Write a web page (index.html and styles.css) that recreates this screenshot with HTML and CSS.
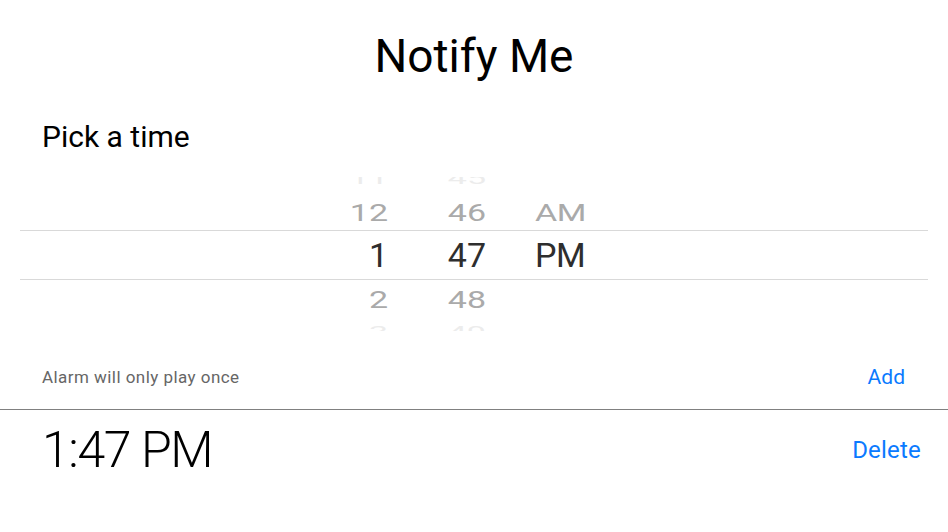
FILE: index.html
```html
<!DOCTYPE html>
<html>
<head>
<meta charset="utf-8">
<link rel="stylesheet" href="styles.css">
</head>
<body>
<div class="app">
  <h1 class="title">Notify Me</h1>
  <h2 class="label">Pick a time</h2>
  <div class="picker">
    <div class="row edge top"><span class="h">11</span><span class="m">45</span><span class="p"></span></div>
    <div class="row near up"><span class="h">12</span><span class="m">46</span><span class="p">AM</span></div>
    <div class="row selected"><span class="h">1</span><span class="m">47</span><span class="p">PM</span></div>
    <div class="row near down"><span class="h">2</span><span class="m">48</span><span class="p"></span></div>
    <div class="row edge bottom"><span class="h">3</span><span class="m">49</span><span class="p"></span></div>
  </div>
  <div class="actions">
    <span class="note">Alarm will only play once</span>
    <a class="link add">Add</a>
  </div>
  <div class="alarm">
    <span class="time">1:47 PM</span>
    <a class="link delete">Delete</a>
  </div>
</div>
</body>
</html>
```
FILE: styles.css
```css
html, body {
  margin: 0;
  padding: 0;
  background: #fff;
}
body {
  font-family: Roboto, "Liberation Sans", sans-serif;
  color: #000;
  width: 948px;
  height: 532px;
  overflow: hidden;
}
.app {
  display: flex;
  flex-direction: column;
}
.title {
  margin: 0;
  padding-top: 26px;
  font-size: 46px;
  font-weight: 400;
  line-height: 60px;
  text-align: center;
}
.label {
  margin: 0;
  padding: 0 42px;
  margin-top: 31px;
  font-size: 30px;
  font-weight: 400;
  line-height: 40px;
}
.picker {
  margin: 20px 20px 0;
  height: 154px;
  overflow: hidden;
  display: flex;
  flex-direction: column;
  flex-shrink: 0;
}
.row {
  display: grid;
  grid-template-columns: 368px 98px 1fr;
  align-items: center;
  font-size: 34px;
  color: #2e2e2e;
  flex-shrink: 0;
  box-sizing: border-box;
}
.row span { display: block; }
.row .h, .row .m { text-align: right; }
.row .p { padding-left: 49px; letter-spacing: -0.5px; }
.row.edge {
  color: #ececec;
  overflow: hidden;
}
.row.top { height: 18px; }
.row.top span { line-height: 18px; transform: translateY(-8px) scaleY(0.5); }
.row.bottom { height: 12px; }
.row.bottom span { line-height: 12px; transform: translateY(7px) scaleY(0.5); }
.row.near { color: #aaa; }
.row.up { height: 35px; }
.row.down { height: 39px; }
.row.near span { transform: scaleY(0.72); line-height: 35px; }
.row.selected {
  height: 50px;
  border-top: 1px solid #d9d9d9;
  border-bottom: 1px solid #d9d9d9;
}
.actions {
  display: flex;
  justify-content: space-between;
  align-items: center;
  padding: 0 43px 0 42px;
  margin-top: 31px;
  height: 30px;
  flex-shrink: 0;
}
.note {
  font-size: 17px;
  letter-spacing: 0.45px;
  color: #666;
}
.link {
  color: #0a7aff;
  font-size: 21px;
}
.alarm {
  display: flex;
  justify-content: space-between;
  align-items: center;
  border-top: 1px solid #808080;
  margin-top: 17px;
  padding: 10px 27px 0 42px;
  height: 60px;
  flex-shrink: 0;
}
.time {
  font-size: 50px;
  font-weight: 300;
  letter-spacing: -1.4px;
}
.delete {
  font-size: 24px;
  letter-spacing: 0.2px;
}
```
